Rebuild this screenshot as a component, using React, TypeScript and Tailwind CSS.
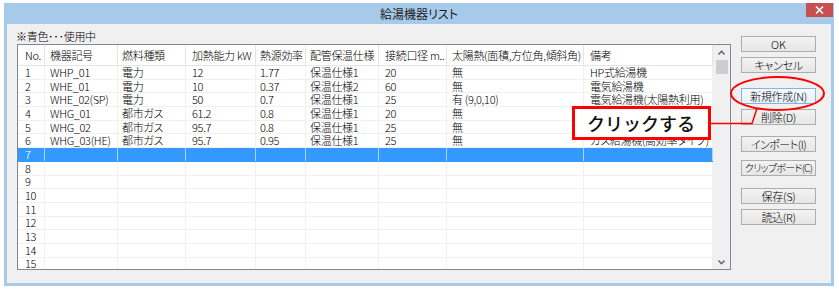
import React from 'react';

const colClasses = [
  'w-[27px] pl-[7px]',
  'w-[73px] pl-[5px]',
  'w-[68px] pl-[4px]',
  'w-[70px] pl-[6px]',
  'w-[50px] pl-[4px]',
  'w-[73px] pl-[4px]',
  'w-[68px] pl-[6px]',
  'w-[137px] pl-[5px]',
  'w-[129px] pl-[6px]',
];

const header = [
  'No.',
  '機器記号',
  '燃料種類',
  '加熱能力 kW',
  '熱源効率',
  '配管保温仕様',
  '接続口径 m..',
  '太陽熱(面積,方位角,傾斜角)',
  '備考',
];

const data: string[][] = [
  ['1', 'WHP_01', '電力', '12', '1.77', '保温仕様1', '20', '無', 'HP式給湯機'],
  ['2', 'WHE_01', '電力', '10', '0.37', '保温仕様2', '60', '無', '電気給湯機'],
  ['3', 'WHE_02(SP)', '電力', '50', '0.7', '保温仕様1', '25', '有 (9,0,10)', '電気給湯機(太陽熱利用)'],
  ['4', 'WHG_01', '都市ガス', '61.2', '0.8', '保温仕様1', '20', '無', 'ガス給湯機'],
  ['5', 'WHG_02', '都市ガス', '95.7', '0.8', '保温仕様1', '25', '無', 'ガス給湯機'],
  ['6', 'WHG_03(HE)', '都市ガス', '95.7', '0.95', '保温仕様1', '25', '無', 'ガス給湯機(高効率タイプ)'],
];
for (let i = 7; i <= 15; i++) data.push([String(i), '', '', '', '', '', '', '', '']);

function Btn({ label, className, focus }: { label: string; className: string; focus?: boolean }) {
  return (
    <div
      className={
        'h-[16px] w-[75px] flex items-center justify-center border leading-none text-black whitespace-nowrap font-light ' +
        (focus
          ? 'border-[#7eb4ea] bg-linear-to-b from-[#f5f9fd] to-[#e8f1fa] '
          : 'border-[#adadad] bg-linear-to-b from-[#f3f3f3] to-[#e6e6e6] ') +
        className
      }
    >
      {label}
    </div>
  );
}

export default function App() {
  return (
    <div className="relative w-[839px] h-[291px] bg-white overflow-hidden font-['Noto_Sans_CJK_JP','Noto_Sans',sans-serif] [font-feature-settings:'palt'] text-black">
      {/* window */}
      <div className="ml-[4px] mt-[3px] w-[830px] h-[283px] bg-[#a8caea] flex flex-col">
        {/* title bar */}
        <div className="h-[21px] flex items-start">
          <div className="w-[28px]" />
          <div className="flex-1 h-[21px] flex items-center justify-center text-[12px] leading-none text-[#1a1a1a]">
            給湯機器リスト
          </div>
          <div className="w-[27px] h-[14px] mr-[1px] bg-[#c75050] flex items-center justify-center">
            <svg width="9" height="8" viewBox="0 0 9 8">
              <path d="M1 0.5 L8 7.5 M8 0.5 L1 7.5" stroke="white" strokeWidth="1.6" />
            </svg>
          </div>
        </div>
        {/* content */}
        <div className="flex-1 mx-[3px] mb-[3px] bg-[#f0f0f0] flex">
          <div className="flex flex-col pl-[10px] pt-[5px]">
            <div className="h-[15px] -ml-[1px] flex items-center text-[11px] leading-none tracking-[-0.3px] font-light">
              ※青色･･･使用中
            </div>
            {/* table */}
            <div className="w-[714px] h-[226px] border border-[#828790] bg-white flex overflow-hidden">
              <div className="w-[695px] flex flex-col">
                <div className="h-[21px] shrink-0 flex border-b border-[#e5e5e5]">
                  {header.map((h, i) => (
                    <div
                      key={i}
                      className={
                        colClasses[i] +
                        ' shrink-0 h-full flex items-center border-r border-[#e5e5e5] whitespace-nowrap text-[11px] leading-none tracking-[-0.3px] font-light'
                      }
                    >
                      {h}
                    </div>
                  ))}
                </div>
                {data.map((row, r) => {
                  const sel = r === 6;
                  return (
                    <div
                      key={r}
                      className={
                        'h-[13.7px] shrink-0 flex border-b ' +
                        (sel ? 'bg-[#3399ff] text-white border-[#3399ff]' : 'border-[#f0f0f0]')
                      }
                    >
                      {row.map((c, i) => (
                        <div
                          key={i}
                          className={
                            colClasses[i] +
                            ' shrink-0 h-full flex items-center border-r whitespace-nowrap text-[11px] leading-none tracking-[-0.3px] font-light ' +
                            (sel ? 'border-[#a9d2ff]' : 'border-[#f0f0f0]')
                          }
                        >
                          {c}
                        </div>
                      ))}
                    </div>
                  );
                })}
              </div>
              {/* scrollbar */}
              <div className="w-[17px] h-full bg-[#f0f0f0] flex flex-col items-center">
                <div className="h-[15px] w-full flex items-center justify-center">
                  <svg width="7" height="5" viewBox="0 0 7 5">
                    <path d="M0.5 4.5 L3.5 1.2 L6.5 4.5" fill="none" stroke="#606060" strokeWidth="1.4" />
                  </svg>
                </div>
                <div className="w-[12px] h-[14px] bg-[#cdcdcd]" />
                <div className="flex-1" />
                <div className="h-[14px] w-full flex items-center justify-center">
                  <svg width="7" height="5" viewBox="0 0 7 5">
                    <path d="M0.5 0.5 L3.5 3.8 L6.5 0.5" fill="none" stroke="#606060" strokeWidth="1.4" />
                  </svg>
                </div>
              </div>
            </div>
          </div>
          {/* buttons */}
          <div className="flex flex-col ml-[10px] pt-[12px]">
            <Btn label="OK" className="text-[11px]" />
            <Btn label="キャンセル" className="mt-[5px] text-[11px] tracking-[-0.3px]" />
            <Btn label="新規作成(N)" className="mt-[15px] text-[11px] tracking-[-0.3px]" focus />
            <Btn label="削除(D)" className="mt-[5px] text-[11px] tracking-[-0.3px]" />
            <Btn label="インポート(I)" className="mt-[11px] text-[11px] tracking-[-0.5px]" />
            <Btn label="クリップボード(C)" className="mt-[8px] text-[10px] tracking-[-0.7px]" />
            <Btn label="保存(S)" className="mt-[12px] text-[11px] tracking-[-0.3px]" />
            <Btn label="読込(R)" className="mt-[5px] text-[11px] tracking-[-0.3px]" />
          </div>
        </div>
      </div>

      {/* callout box */}
      <div className="absolute left-[572px] top-[106px] w-[139px] h-[34px] border-[3px] border-[#ff0000] bg-white flex items-center pl-[12px] text-[18px] leading-none font-medium text-[#111] [font-feature-settings:normal]">
        クリックする
      </div>

      {/* ellipse + connector */}
      <svg className="absolute left-0 top-0 pointer-events-none" width="839" height="291" viewBox="0 0 839 291">
        <ellipse cx="777.5" cy="93.5" rx="46.5" ry="16.5" fill="none" stroke="#ff0000" strokeWidth="2" />
        <polyline points="711,123.5 752,123.5 757,108.5" fill="none" stroke="#ff0000" strokeWidth="1.5" />
      </svg>
    </div>
  );
}
